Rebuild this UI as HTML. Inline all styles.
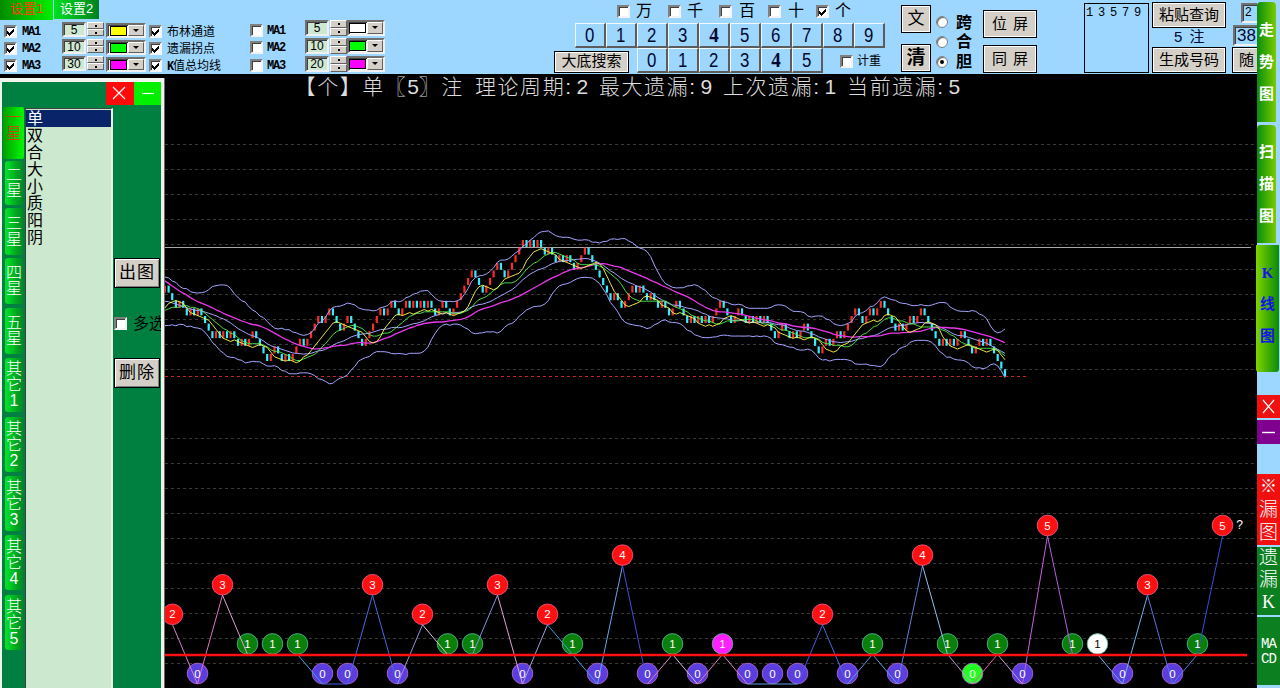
<!DOCTYPE html>
<html lang="zh-CN">
<head>
<meta charset="utf-8">
<title>K线图</title>
<style>
*{box-sizing:border-box;margin:0;padding:0}
html,body{width:1280px;height:688px;overflow:hidden;background:#000}
body{position:relative;font-family:"Liberation Sans","Noto Sans CJK SC",sans-serif;font-size:12px;color:#000}
.abs{position:absolute}
#top{position:absolute;left:0;top:0;width:1280px;height:74px;background:#9dd7ff}
#rightcol{position:absolute;left:1257px;top:0;width:23px;height:688px;background:#9dd7ff}
.tab{position:absolute;top:0;height:20px;font-size:13px;line-height:17px;text-align:center;white-space:nowrap}
.cb{position:absolute;width:13px;height:13px;background:#fff;border:2px solid;border-color:#808080 #f4f4f4 #f4f4f4 #808080;box-shadow:inset 1px 1px 0 #404040}
.cb.on:after{content:"";position:absolute;left:1px;top:4px;width:1px;height:3px;background:#000;box-shadow:1px 1px #000,2px 2px #000,3px 1px #000,4px 0 #000,5px -1px #000,6px -2px #000}
.lbl{position:absolute;font-size:12px;line-height:14px;white-space:nowrap}
.mono{font-family:"Liberation Mono","Noto Sans CJK SC",monospace;letter-spacing:-1.2px;font-weight:bold}
.tb{position:absolute;background:#cfe8d2;border:2px solid;border-color:#707070 #f0f0f0 #f0f0f0 #707070;box-shadow:inset 1px 1px 0 #404040;font-size:12px;text-align:center;line-height:12px}
.spin{position:absolute;width:17px;height:15px}
.spin i{position:absolute;left:0;width:17px;height:7px;background:#d4d0c8;border:1px solid;border-color:#fff #606060 #606060 #fff}
.spin i:after{content:"";position:absolute;left:7px;top:2px;width:2px;height:2px;background:#000}
.combo{position:absolute;width:40px;height:15px;background:#fff;border:2px solid;border-color:#707070 #f0f0f0 #f0f0f0 #707070;box-shadow:inset 1px 1px 0 #404040}
.combo b{position:absolute;left:2px;top:1px;width:17px;height:10px;border:1px solid #000}
.combo i{position:absolute;right:0;top:0;width:16px;height:11px;background:#d4d0c8;border:1px solid;border-color:#fff #606060 #606060 #fff}
.combo i:after{content:"";position:absolute;left:4px;top:3px;border:3px solid transparent;border-top:3px solid #000;border-bottom:0}
.nb{position:absolute;width:31px;height:25px;background:#9dd7ff;border:solid;border-width:1px 2px 2px 1px;border-color:#f0faff #5c5c5c #5c5c5c #f0faff;font-size:20px;line-height:22px;text-align:center;color:#000830}
.nb span{display:inline-block;transform:scaleX(.84)}
.nb .f{font-family:'Liberation Serif',serif;font-weight:bold;transform:scaleX(.95)}
.btn{position:absolute;background:#d4d0c8;border:1px solid #000;box-shadow:inset 1px 1px 0 #fff,inset -1px -1px 0 #fff;text-align:center;white-space:nowrap}
.rad{position:absolute;width:12px;height:12px;border-radius:50%;background:#fff;border:1px solid #808080;box-shadow:inset 1px 1px 1px #606060}
.rad.on:after{content:"";position:absolute;left:3px;top:3px;width:4px;height:4px;border-radius:50%;background:#000}
.vt{position:absolute;left:1257px;width:19px;border-radius:4px 4px 0 0;background:linear-gradient(90deg,#0a8c0a,#78cc00);color:#fff;font-weight:bold;font-size:15px;text-align:center}
.vt span{position:absolute;left:0;width:100%;line-height:16px}
#lp{position:absolute;left:0;top:78px;width:164px;height:610px;background:#f0f4ec}
#lp .in{position:absolute;left:2px;top:4px;width:159px;height:606px;background:#008040}
.ltab{position:absolute;left:5px;width:18px;font-weight:300;border-radius:3px;background:linear-gradient(90deg,#00e628,#00a020 70%,#008828);color:#fff;font-size:16px;line-height:16px;text-align:center;display:flex;flex-direction:column;justify-content:center}
#lb{position:absolute;left:25px;top:108px;width:88px;height:580px;padding-top:1px;background:#cce8cf;border-left:1px solid #404040;border-top:1px solid #404040;border-right:2px solid #e8f4e8;font-size:16px;line-height:17px}
#lb div{height:17px;padding-left:1px}
#title span{position:absolute;top:0;white-space:nowrap;font-size:21px;line-height:24px;letter-spacing:1.55px;color:#dcdcdc;font-weight:300}
#title i{font-style:normal;letter-spacing:5.4px}
svg text{font-family:"Liberation Sans",sans-serif}
</style>
</head>
<body>
<!-- chart -->
<svg class="abs" style="left:0;top:0" width="1280" height="688" viewBox="0 0 1280 688">
<line x1="165" y1="144.5" x2="1256" y2="144.5" stroke="#383b34" stroke-width="1" stroke-dasharray="3 3"/>
<line x1="165" y1="169.5" x2="1256" y2="169.5" stroke="#383b34" stroke-width="1" stroke-dasharray="3 3"/>
<line x1="165" y1="194.5" x2="1256" y2="194.5" stroke="#383b34" stroke-width="1" stroke-dasharray="3 3"/>
<line x1="165" y1="219.5" x2="1256" y2="219.5" stroke="#383b34" stroke-width="1" stroke-dasharray="3 3"/>
<line x1="165" y1="244.5" x2="1256" y2="244.5" stroke="#383b34" stroke-width="1" stroke-dasharray="3 3"/>
<line x1="165" y1="269.5" x2="1256" y2="269.5" stroke="#383b34" stroke-width="1" stroke-dasharray="3 3"/>
<line x1="165" y1="294.5" x2="1256" y2="294.5" stroke="#383b34" stroke-width="1" stroke-dasharray="3 3"/>
<line x1="165" y1="319.5" x2="1256" y2="319.5" stroke="#383b34" stroke-width="1" stroke-dasharray="3 3"/>
<line x1="165" y1="344.5" x2="1256" y2="344.5" stroke="#383b34" stroke-width="1" stroke-dasharray="3 3"/>
<line x1="165" y1="369.5" x2="1256" y2="369.5" stroke="#383b34" stroke-width="1" stroke-dasharray="3 3"/>
<line x1="165" y1="438.5" x2="1256" y2="438.5" stroke="#383b34" stroke-width="1" stroke-dasharray="3 3"/>
<line x1="165" y1="463.5" x2="1256" y2="463.5" stroke="#383b34" stroke-width="1" stroke-dasharray="3 3"/>
<line x1="165" y1="488.5" x2="1256" y2="488.5" stroke="#383b34" stroke-width="1" stroke-dasharray="3 3"/>
<line x1="165" y1="513.5" x2="1256" y2="513.5" stroke="#383b34" stroke-width="1" stroke-dasharray="3 3"/>
<line x1="165" y1="538.5" x2="1256" y2="538.5" stroke="#383b34" stroke-width="1" stroke-dasharray="3 3"/>
<line x1="165" y1="563.5" x2="1256" y2="563.5" stroke="#383b34" stroke-width="1" stroke-dasharray="3 3"/>
<line x1="165" y1="588.5" x2="1256" y2="588.5" stroke="#383b34" stroke-width="1" stroke-dasharray="3 3"/>
<line x1="165" y1="613.5" x2="1256" y2="613.5" stroke="#383b34" stroke-width="1" stroke-dasharray="3 3"/>
<line x1="165" y1="638.5" x2="1256" y2="638.5" stroke="#383b34" stroke-width="1" stroke-dasharray="3 3"/>
<line x1="165" y1="663.5" x2="1256" y2="663.5" stroke="#383b34" stroke-width="1" stroke-dasharray="3 3"/>
<line x1="165" y1="247.5" x2="1251" y2="247.5" stroke="#a8a8a8" stroke-width="1"/>
<line x1="165" y1="376.5" x2="1026" y2="376.5" stroke="#c02626" stroke-width="1" stroke-dasharray="3 3"/>
<rect x="163.8" y="285.6" width="2.2" height="7.0" fill="#ff2a2a"/>
<rect x="167.5" y="285.6" width="2.2" height="7.0" fill="#30f0ff"/>
<rect x="171.1" y="293.2" width="2.2" height="7.0" fill="#30f0ff"/>
<rect x="174.8" y="300.8" width="2.2" height="7.0" fill="#30f0ff"/>
<rect x="178.4" y="300.8" width="2.2" height="7.0" fill="#ff2a2a"/>
<rect x="182.1" y="300.8" width="2.2" height="7.0" fill="#30f0ff"/>
<rect x="185.7" y="308.4" width="2.2" height="7.0" fill="#30f0ff"/>
<rect x="189.4" y="308.4" width="2.2" height="7.0" fill="#ff2a2a"/>
<rect x="193.0" y="308.4" width="2.2" height="7.0" fill="#30f0ff"/>
<rect x="196.7" y="308.4" width="2.2" height="7.0" fill="#ff2a2a"/>
<rect x="200.3" y="308.4" width="2.2" height="7.0" fill="#30f0ff"/>
<rect x="204.0" y="316.0" width="2.2" height="7.0" fill="#30f0ff"/>
<rect x="207.6" y="323.6" width="2.2" height="7.0" fill="#30f0ff"/>
<rect x="211.3" y="331.2" width="2.2" height="7.0" fill="#30f0ff"/>
<rect x="214.9" y="331.2" width="2.2" height="7.0" fill="#ff2a2a"/>
<rect x="218.6" y="331.2" width="2.2" height="7.0" fill="#30f0ff"/>
<rect x="222.2" y="331.2" width="2.2" height="7.0" fill="#ff2a2a"/>
<rect x="225.9" y="331.2" width="2.2" height="7.0" fill="#30f0ff"/>
<rect x="229.5" y="331.2" width="2.2" height="7.0" fill="#ff2a2a"/>
<rect x="233.2" y="331.2" width="2.2" height="7.0" fill="#30f0ff"/>
<rect x="236.9" y="338.8" width="2.2" height="7.0" fill="#30f0ff"/>
<rect x="240.5" y="338.8" width="2.2" height="7.0" fill="#ff2a2a"/>
<rect x="244.2" y="338.8" width="2.2" height="7.0" fill="#30f0ff"/>
<rect x="247.8" y="338.8" width="2.2" height="7.0" fill="#ff2a2a"/>
<rect x="251.5" y="331.2" width="2.2" height="7.0" fill="#ff2a2a"/>
<rect x="255.1" y="331.2" width="2.2" height="7.0" fill="#30f0ff"/>
<rect x="258.8" y="338.8" width="2.2" height="7.0" fill="#30f0ff"/>
<rect x="262.4" y="346.4" width="2.2" height="7.0" fill="#30f0ff"/>
<rect x="266.1" y="354.0" width="2.2" height="7.0" fill="#30f0ff"/>
<rect x="269.7" y="354.0" width="2.2" height="7.0" fill="#ff2a2a"/>
<rect x="273.4" y="346.4" width="2.2" height="7.0" fill="#ff2a2a"/>
<rect x="277.0" y="346.4" width="2.2" height="7.0" fill="#30f0ff"/>
<rect x="280.7" y="354.0" width="2.2" height="7.0" fill="#30f0ff"/>
<rect x="284.3" y="354.0" width="2.2" height="7.0" fill="#ff2a2a"/>
<rect x="288.0" y="354.0" width="2.2" height="7.0" fill="#30f0ff"/>
<rect x="291.6" y="354.0" width="2.2" height="7.0" fill="#ff2a2a"/>
<rect x="295.3" y="346.4" width="2.2" height="7.0" fill="#ff2a2a"/>
<rect x="298.9" y="338.8" width="2.2" height="7.0" fill="#ff2a2a"/>
<rect x="302.6" y="338.8" width="2.2" height="7.0" fill="#30f0ff"/>
<rect x="306.3" y="338.8" width="2.2" height="7.0" fill="#ff2a2a"/>
<rect x="309.9" y="331.2" width="2.2" height="7.0" fill="#ff2a2a"/>
<rect x="313.6" y="323.6" width="2.2" height="7.0" fill="#ff2a2a"/>
<rect x="317.2" y="316.0" width="2.2" height="7.0" fill="#ff2a2a"/>
<rect x="320.9" y="316.0" width="2.2" height="7.0" fill="#30f0ff"/>
<rect x="324.5" y="316.0" width="2.2" height="7.0" fill="#ff2a2a"/>
<rect x="328.2" y="308.4" width="2.2" height="7.0" fill="#ff2a2a"/>
<rect x="331.8" y="308.4" width="2.2" height="7.0" fill="#30f0ff"/>
<rect x="335.5" y="316.0" width="2.2" height="7.0" fill="#30f0ff"/>
<rect x="339.1" y="323.6" width="2.2" height="7.0" fill="#30f0ff"/>
<rect x="342.8" y="323.6" width="2.2" height="7.0" fill="#ff2a2a"/>
<rect x="346.4" y="316.0" width="2.2" height="7.0" fill="#ff2a2a"/>
<rect x="350.1" y="316.0" width="2.2" height="7.0" fill="#30f0ff"/>
<rect x="353.7" y="323.6" width="2.2" height="7.0" fill="#30f0ff"/>
<rect x="357.4" y="331.2" width="2.2" height="7.0" fill="#30f0ff"/>
<rect x="361.0" y="338.8" width="2.2" height="7.0" fill="#30f0ff"/>
<rect x="364.7" y="338.8" width="2.2" height="7.0" fill="#ff2a2a"/>
<rect x="368.3" y="331.2" width="2.2" height="7.0" fill="#ff2a2a"/>
<rect x="372.0" y="323.6" width="2.2" height="7.0" fill="#ff2a2a"/>
<rect x="375.7" y="316.0" width="2.2" height="7.0" fill="#ff2a2a"/>
<rect x="379.3" y="308.4" width="2.2" height="7.0" fill="#ff2a2a"/>
<rect x="383.0" y="308.4" width="2.2" height="7.0" fill="#30f0ff"/>
<rect x="386.6" y="308.4" width="2.2" height="7.0" fill="#ff2a2a"/>
<rect x="390.3" y="300.8" width="2.2" height="7.0" fill="#ff2a2a"/>
<rect x="393.9" y="300.8" width="2.2" height="7.0" fill="#30f0ff"/>
<rect x="397.6" y="308.4" width="2.2" height="7.0" fill="#30f0ff"/>
<rect x="401.2" y="308.4" width="2.2" height="7.0" fill="#ff2a2a"/>
<rect x="404.9" y="300.8" width="2.2" height="7.0" fill="#ff2a2a"/>
<rect x="408.5" y="300.8" width="2.2" height="7.0" fill="#30f0ff"/>
<rect x="412.2" y="300.8" width="2.2" height="7.0" fill="#ff2a2a"/>
<rect x="415.8" y="300.8" width="2.2" height="7.0" fill="#30f0ff"/>
<rect x="419.5" y="300.8" width="2.2" height="7.0" fill="#ff2a2a"/>
<rect x="423.1" y="300.8" width="2.2" height="7.0" fill="#30f0ff"/>
<rect x="426.8" y="300.8" width="2.2" height="7.0" fill="#ff2a2a"/>
<rect x="430.4" y="300.8" width="2.2" height="7.0" fill="#30f0ff"/>
<rect x="434.1" y="308.4" width="2.2" height="7.0" fill="#30f0ff"/>
<rect x="437.7" y="308.4" width="2.2" height="7.0" fill="#ff2a2a"/>
<rect x="441.4" y="300.8" width="2.2" height="7.0" fill="#ff2a2a"/>
<rect x="445.1" y="300.8" width="2.2" height="7.0" fill="#30f0ff"/>
<rect x="448.7" y="308.4" width="2.2" height="7.0" fill="#30f0ff"/>
<rect x="452.4" y="308.4" width="2.2" height="7.0" fill="#ff2a2a"/>
<rect x="456.0" y="300.8" width="2.2" height="7.0" fill="#ff2a2a"/>
<rect x="459.7" y="293.2" width="2.2" height="7.0" fill="#ff2a2a"/>
<rect x="463.3" y="285.6" width="2.2" height="7.0" fill="#ff2a2a"/>
<rect x="467.0" y="278.0" width="2.2" height="7.0" fill="#ff2a2a"/>
<rect x="470.6" y="270.4" width="2.2" height="7.0" fill="#ff2a2a"/>
<rect x="474.3" y="270.4" width="2.2" height="7.0" fill="#30f0ff"/>
<rect x="477.9" y="278.0" width="2.2" height="7.0" fill="#30f0ff"/>
<rect x="481.6" y="285.6" width="2.2" height="7.0" fill="#30f0ff"/>
<rect x="485.2" y="285.6" width="2.2" height="7.0" fill="#ff2a2a"/>
<rect x="488.9" y="278.0" width="2.2" height="7.0" fill="#ff2a2a"/>
<rect x="492.5" y="270.4" width="2.2" height="7.0" fill="#ff2a2a"/>
<rect x="496.2" y="262.8" width="2.2" height="7.0" fill="#ff2a2a"/>
<rect x="499.8" y="262.8" width="2.2" height="7.0" fill="#30f0ff"/>
<rect x="503.5" y="270.4" width="2.2" height="7.0" fill="#30f0ff"/>
<rect x="507.1" y="270.4" width="2.2" height="7.0" fill="#ff2a2a"/>
<rect x="510.8" y="262.8" width="2.2" height="7.0" fill="#ff2a2a"/>
<rect x="514.4" y="255.2" width="2.2" height="7.0" fill="#ff2a2a"/>
<rect x="518.1" y="247.6" width="2.2" height="7.0" fill="#ff2a2a"/>
<rect x="521.8" y="240.0" width="2.2" height="7.0" fill="#ff2a2a"/>
<rect x="525.4" y="240.0" width="2.2" height="7.0" fill="#30f0ff"/>
<rect x="529.1" y="240.0" width="2.2" height="7.0" fill="#ff2a2a"/>
<rect x="532.7" y="240.0" width="2.2" height="7.0" fill="#30f0ff"/>
<rect x="536.4" y="240.0" width="2.2" height="7.0" fill="#ff2a2a"/>
<rect x="540.0" y="240.0" width="2.2" height="7.0" fill="#30f0ff"/>
<rect x="543.7" y="247.6" width="2.2" height="7.0" fill="#30f0ff"/>
<rect x="547.3" y="247.6" width="2.2" height="7.0" fill="#ff2a2a"/>
<rect x="551.0" y="247.6" width="2.2" height="7.0" fill="#30f0ff"/>
<rect x="554.6" y="255.2" width="2.2" height="7.0" fill="#30f0ff"/>
<rect x="558.3" y="255.2" width="2.2" height="7.0" fill="#ff2a2a"/>
<rect x="561.9" y="255.2" width="2.2" height="7.0" fill="#30f0ff"/>
<rect x="565.6" y="255.2" width="2.2" height="7.0" fill="#ff2a2a"/>
<rect x="569.2" y="255.2" width="2.2" height="7.0" fill="#30f0ff"/>
<rect x="572.9" y="262.8" width="2.2" height="7.0" fill="#30f0ff"/>
<rect x="576.5" y="262.8" width="2.2" height="7.0" fill="#ff2a2a"/>
<rect x="580.2" y="255.2" width="2.2" height="7.0" fill="#ff2a2a"/>
<rect x="583.8" y="247.6" width="2.2" height="7.0" fill="#ff2a2a"/>
<rect x="587.5" y="247.6" width="2.2" height="7.0" fill="#30f0ff"/>
<rect x="591.2" y="255.2" width="2.2" height="7.0" fill="#30f0ff"/>
<rect x="594.8" y="262.8" width="2.2" height="7.0" fill="#30f0ff"/>
<rect x="598.5" y="270.4" width="2.2" height="7.0" fill="#30f0ff"/>
<rect x="602.1" y="278.0" width="2.2" height="7.0" fill="#30f0ff"/>
<rect x="605.8" y="285.6" width="2.2" height="7.0" fill="#30f0ff"/>
<rect x="609.4" y="293.2" width="2.2" height="7.0" fill="#30f0ff"/>
<rect x="613.1" y="293.2" width="2.2" height="7.0" fill="#ff2a2a"/>
<rect x="616.7" y="293.2" width="2.2" height="7.0" fill="#30f0ff"/>
<rect x="620.4" y="300.8" width="2.2" height="7.0" fill="#30f0ff"/>
<rect x="624.0" y="300.8" width="2.2" height="7.0" fill="#ff2a2a"/>
<rect x="627.7" y="293.2" width="2.2" height="7.0" fill="#ff2a2a"/>
<rect x="631.3" y="285.6" width="2.2" height="7.0" fill="#ff2a2a"/>
<rect x="635.0" y="285.6" width="2.2" height="7.0" fill="#30f0ff"/>
<rect x="638.6" y="285.6" width="2.2" height="7.0" fill="#ff2a2a"/>
<rect x="642.3" y="285.6" width="2.2" height="7.0" fill="#30f0ff"/>
<rect x="645.9" y="293.2" width="2.2" height="7.0" fill="#30f0ff"/>
<rect x="649.6" y="293.2" width="2.2" height="7.0" fill="#ff2a2a"/>
<rect x="653.2" y="293.2" width="2.2" height="7.0" fill="#30f0ff"/>
<rect x="656.9" y="300.8" width="2.2" height="7.0" fill="#30f0ff"/>
<rect x="660.6" y="300.8" width="2.2" height="7.0" fill="#ff2a2a"/>
<rect x="664.2" y="300.8" width="2.2" height="7.0" fill="#30f0ff"/>
<rect x="667.9" y="308.4" width="2.2" height="7.0" fill="#30f0ff"/>
<rect x="671.5" y="308.4" width="2.2" height="7.0" fill="#ff2a2a"/>
<rect x="675.2" y="300.8" width="2.2" height="7.0" fill="#ff2a2a"/>
<rect x="678.8" y="300.8" width="2.2" height="7.0" fill="#30f0ff"/>
<rect x="682.5" y="308.4" width="2.2" height="7.0" fill="#30f0ff"/>
<rect x="686.1" y="316.0" width="2.2" height="7.0" fill="#30f0ff"/>
<rect x="689.8" y="316.0" width="2.2" height="7.0" fill="#ff2a2a"/>
<rect x="693.4" y="316.0" width="2.2" height="7.0" fill="#30f0ff"/>
<rect x="697.1" y="316.0" width="2.2" height="7.0" fill="#ff2a2a"/>
<rect x="700.7" y="316.0" width="2.2" height="7.0" fill="#30f0ff"/>
<rect x="704.4" y="316.0" width="2.2" height="7.0" fill="#ff2a2a"/>
<rect x="708.0" y="316.0" width="2.2" height="7.0" fill="#30f0ff"/>
<rect x="711.7" y="316.0" width="2.2" height="7.0" fill="#ff2a2a"/>
<rect x="715.3" y="308.4" width="2.2" height="7.0" fill="#ff2a2a"/>
<rect x="719.0" y="300.8" width="2.2" height="7.0" fill="#ff2a2a"/>
<rect x="722.6" y="300.8" width="2.2" height="7.0" fill="#30f0ff"/>
<rect x="726.3" y="308.4" width="2.2" height="7.0" fill="#30f0ff"/>
<rect x="730.0" y="316.0" width="2.2" height="7.0" fill="#30f0ff"/>
<rect x="733.6" y="316.0" width="2.2" height="7.0" fill="#ff2a2a"/>
<rect x="737.3" y="308.4" width="2.2" height="7.0" fill="#ff2a2a"/>
<rect x="740.9" y="308.4" width="2.2" height="7.0" fill="#30f0ff"/>
<rect x="744.6" y="316.0" width="2.2" height="7.0" fill="#30f0ff"/>
<rect x="748.2" y="316.0" width="2.2" height="7.0" fill="#ff2a2a"/>
<rect x="751.9" y="316.0" width="2.2" height="7.0" fill="#30f0ff"/>
<rect x="755.5" y="316.0" width="2.2" height="7.0" fill="#ff2a2a"/>
<rect x="759.2" y="316.0" width="2.2" height="7.0" fill="#30f0ff"/>
<rect x="762.8" y="316.0" width="2.2" height="7.0" fill="#ff2a2a"/>
<rect x="766.5" y="316.0" width="2.2" height="7.0" fill="#30f0ff"/>
<rect x="770.1" y="323.6" width="2.2" height="7.0" fill="#30f0ff"/>
<rect x="773.8" y="331.2" width="2.2" height="7.0" fill="#30f0ff"/>
<rect x="777.4" y="331.2" width="2.2" height="7.0" fill="#ff2a2a"/>
<rect x="781.1" y="323.6" width="2.2" height="7.0" fill="#ff2a2a"/>
<rect x="784.7" y="323.6" width="2.2" height="7.0" fill="#30f0ff"/>
<rect x="788.4" y="331.2" width="2.2" height="7.0" fill="#30f0ff"/>
<rect x="792.0" y="331.2" width="2.2" height="7.0" fill="#ff2a2a"/>
<rect x="795.7" y="331.2" width="2.2" height="7.0" fill="#30f0ff"/>
<rect x="799.4" y="331.2" width="2.2" height="7.0" fill="#ff2a2a"/>
<rect x="803.0" y="323.6" width="2.2" height="7.0" fill="#ff2a2a"/>
<rect x="806.7" y="323.6" width="2.2" height="7.0" fill="#30f0ff"/>
<rect x="810.3" y="331.2" width="2.2" height="7.0" fill="#30f0ff"/>
<rect x="814.0" y="338.8" width="2.2" height="7.0" fill="#30f0ff"/>
<rect x="817.6" y="346.4" width="2.2" height="7.0" fill="#30f0ff"/>
<rect x="821.3" y="346.4" width="2.2" height="7.0" fill="#ff2a2a"/>
<rect x="824.9" y="338.8" width="2.2" height="7.0" fill="#ff2a2a"/>
<rect x="828.6" y="338.8" width="2.2" height="7.0" fill="#30f0ff"/>
<rect x="832.2" y="338.8" width="2.2" height="7.0" fill="#ff2a2a"/>
<rect x="835.9" y="331.2" width="2.2" height="7.0" fill="#ff2a2a"/>
<rect x="839.5" y="331.2" width="2.2" height="7.0" fill="#30f0ff"/>
<rect x="843.2" y="331.2" width="2.2" height="7.0" fill="#ff2a2a"/>
<rect x="846.8" y="323.6" width="2.2" height="7.0" fill="#ff2a2a"/>
<rect x="850.5" y="316.0" width="2.2" height="7.0" fill="#ff2a2a"/>
<rect x="854.1" y="308.4" width="2.2" height="7.0" fill="#ff2a2a"/>
<rect x="857.8" y="308.4" width="2.2" height="7.0" fill="#30f0ff"/>
<rect x="861.4" y="316.0" width="2.2" height="7.0" fill="#30f0ff"/>
<rect x="865.1" y="316.0" width="2.2" height="7.0" fill="#ff2a2a"/>
<rect x="868.8" y="308.4" width="2.2" height="7.0" fill="#ff2a2a"/>
<rect x="872.4" y="308.4" width="2.2" height="7.0" fill="#30f0ff"/>
<rect x="876.1" y="308.4" width="2.2" height="7.0" fill="#ff2a2a"/>
<rect x="879.7" y="300.8" width="2.2" height="7.0" fill="#ff2a2a"/>
<rect x="883.4" y="300.8" width="2.2" height="7.0" fill="#30f0ff"/>
<rect x="887.0" y="308.4" width="2.2" height="7.0" fill="#30f0ff"/>
<rect x="890.7" y="316.0" width="2.2" height="7.0" fill="#30f0ff"/>
<rect x="894.3" y="323.6" width="2.2" height="7.0" fill="#30f0ff"/>
<rect x="898.0" y="323.6" width="2.2" height="7.0" fill="#ff2a2a"/>
<rect x="901.6" y="323.6" width="2.2" height="7.0" fill="#30f0ff"/>
<rect x="905.3" y="323.6" width="2.2" height="7.0" fill="#ff2a2a"/>
<rect x="908.9" y="316.0" width="2.2" height="7.0" fill="#ff2a2a"/>
<rect x="912.6" y="316.0" width="2.2" height="7.0" fill="#30f0ff"/>
<rect x="916.2" y="316.0" width="2.2" height="7.0" fill="#ff2a2a"/>
<rect x="919.9" y="308.4" width="2.2" height="7.0" fill="#ff2a2a"/>
<rect x="923.5" y="308.4" width="2.2" height="7.0" fill="#30f0ff"/>
<rect x="927.2" y="316.0" width="2.2" height="7.0" fill="#30f0ff"/>
<rect x="930.8" y="323.6" width="2.2" height="7.0" fill="#30f0ff"/>
<rect x="934.5" y="331.2" width="2.2" height="7.0" fill="#30f0ff"/>
<rect x="938.2" y="338.8" width="2.2" height="7.0" fill="#30f0ff"/>
<rect x="941.8" y="338.8" width="2.2" height="7.0" fill="#ff2a2a"/>
<rect x="945.5" y="338.8" width="2.2" height="7.0" fill="#30f0ff"/>
<rect x="949.1" y="338.8" width="2.2" height="7.0" fill="#ff2a2a"/>
<rect x="952.8" y="338.8" width="2.2" height="7.0" fill="#30f0ff"/>
<rect x="956.4" y="338.8" width="2.2" height="7.0" fill="#ff2a2a"/>
<rect x="960.1" y="331.2" width="2.2" height="7.0" fill="#ff2a2a"/>
<rect x="963.7" y="331.2" width="2.2" height="7.0" fill="#30f0ff"/>
<rect x="967.4" y="338.8" width="2.2" height="7.0" fill="#30f0ff"/>
<rect x="971.0" y="346.4" width="2.2" height="7.0" fill="#30f0ff"/>
<rect x="974.7" y="346.4" width="2.2" height="7.0" fill="#ff2a2a"/>
<rect x="978.3" y="338.8" width="2.2" height="7.0" fill="#ff2a2a"/>
<rect x="982.0" y="338.8" width="2.2" height="7.0" fill="#30f0ff"/>
<rect x="985.6" y="338.8" width="2.2" height="7.0" fill="#ff2a2a"/>
<rect x="989.3" y="338.8" width="2.2" height="7.0" fill="#30f0ff"/>
<rect x="992.9" y="346.4" width="2.2" height="7.0" fill="#30f0ff"/>
<rect x="996.6" y="354.0" width="2.2" height="7.0" fill="#30f0ff"/>
<rect x="1000.2" y="361.6" width="2.2" height="7.0" fill="#30f0ff"/>
<rect x="1003.9" y="369.2" width="2.2" height="7.0" fill="#30f0ff"/>
<polyline points="164.9,277.0 168.6,277.9 172.2,281.0 175.9,282.4 179.5,286.3 183.2,288.5 186.8,288.7 190.5,291.7 194.1,292.6 197.8,293.0 201.4,292.7 205.1,291.9 208.7,289.7 212.4,286.6 216.0,285.7 219.7,285.0 223.3,284.9 227.0,285.4 230.6,288.5 234.3,293.9 238.0,297.4 241.6,300.7 245.3,302.1 248.9,306.8 252.6,310.1 256.2,312.0 259.9,316.0 263.5,317.7 267.2,321.4 270.8,325.2 274.5,328.1 278.1,329.0 281.8,328.1 285.4,329.8 289.1,329.7 292.7,332.0 296.4,332.8 300.0,334.5 303.7,335.4 307.4,334.5 311.0,332.8 314.7,328.5 318.3,323.1 322.0,321.5 325.6,317.1 329.3,310.8 332.9,307.4 336.6,306.4 340.2,306.1 343.9,304.8 347.5,303.0 351.2,303.9 354.8,304.9 358.5,307.9 362.1,309.1 365.8,309.9 369.4,310.1 373.1,310.9 376.8,310.2 380.4,307.7 384.1,306.9 387.7,305.6 391.4,301.9 395.0,300.8 398.7,301.9 402.3,300.8 406.0,297.7 409.6,296.5 413.3,294.1 416.9,293.3 420.6,291.2 424.2,290.7 427.9,290.6 431.5,294.4 435.2,298.1 438.8,300.7 442.5,301.3 446.2,301.7 449.8,301.3 453.5,301.7 457.1,300.9 460.8,299.0 464.4,294.3 468.1,288.6 471.7,281.2 475.4,277.6 479.0,275.9 482.7,275.4 486.3,274.0 490.0,271.4 493.6,267.7 497.3,262.4 500.9,260.0 504.6,260.2 508.2,258.9 511.9,256.0 515.5,252.9 519.2,250.5 522.9,246.1 526.5,243.9 530.2,239.9 533.8,237.6 537.5,233.9 541.1,231.9 544.8,231.4 548.4,230.9 552.1,233.4 555.7,235.6 559.4,236.8 563.0,237.3 566.7,237.2 570.3,237.8 574.0,239.2 577.6,240.1 581.3,240.2 584.9,239.7 588.6,240.2 592.3,242.2 595.9,242.1 599.6,243.0 603.2,241.5 606.9,241.3 610.5,239.2 614.2,238.9 617.8,239.5 621.5,238.6 625.1,238.7 628.8,241.1 632.4,242.7 636.1,245.9 639.7,248.0 643.4,249.2 647.0,251.6 650.7,256.6 654.3,265.0 658.0,272.1 661.7,278.8 665.3,283.5 669.0,285.5 672.6,287.3 676.3,287.9 679.9,287.8 683.6,287.7 687.2,286.0 690.9,285.6 694.5,284.7 698.2,285.9 701.8,288.5 705.5,290.5 709.1,294.5 712.8,297.5 716.4,298.6 720.1,300.6 723.7,301.9 727.4,302.4 731.1,304.2 734.7,304.9 738.4,304.2 742.0,304.9 745.7,307.3 749.3,308.3 753.0,308.3 756.6,308.3 760.3,308.3 763.9,308.3 767.6,308.3 771.2,307.3 774.9,305.3 778.5,304.8 782.2,305.1 785.8,306.3 789.5,309.1 793.1,311.3 796.8,311.5 800.5,311.7 804.1,312.6 807.8,315.9 811.4,317.1 815.1,316.2 818.7,315.9 822.4,316.2 826.0,319.0 829.7,319.9 833.3,323.5 837.0,324.9 840.6,325.5 844.3,324.9 847.9,323.5 851.6,321.5 855.2,316.3 858.9,313.5 862.5,312.7 866.2,310.5 869.9,306.9 873.5,305.9 877.2,302.8 880.8,298.5 884.5,296.9 888.1,298.3 891.8,299.7 895.4,300.3 899.1,302.5 902.7,303.4 906.4,303.7 910.0,305.0 913.7,305.7 917.3,305.5 921.0,304.6 924.6,305.5 928.3,305.7 931.9,305.0 935.6,303.7 939.3,302.6 942.9,302.5 946.6,303.0 950.2,307.1 953.9,309.1 957.5,310.7 961.2,311.3 964.8,311.3 968.5,311.6 972.1,310.5 975.8,311.4 979.4,314.1 983.1,315.5 986.7,318.9 990.4,325.8 994.0,330.8 997.7,332.8 1001.3,331.8 1005.0,328.9" fill="none" stroke="#a4a4ff" stroke-width="1" stroke-linejoin="round"/>
<polyline points="164.9,301.3 168.6,301.7 172.2,302.9 175.9,304.1 179.5,305.3 183.2,306.5 186.8,307.7 190.5,308.9 194.1,310.1 197.8,310.5 201.4,310.9 205.1,312.1 208.7,313.3 212.4,314.5 216.0,315.7 219.7,317.7 223.3,318.9 227.0,320.9 230.6,322.9 234.3,325.7 238.0,328.5 241.6,330.5 245.3,332.5 248.9,334.5 252.6,335.7 256.2,336.9 259.9,338.9 263.5,340.9 267.2,343.7 270.8,345.7 274.5,346.9 278.1,348.1 281.8,349.3 285.4,350.5 289.1,351.7 292.7,352.9 296.4,353.3 300.0,353.7 303.7,354.1 307.4,353.7 311.0,353.3 314.7,352.1 318.3,350.9 322.0,350.5 325.6,349.3 329.3,347.3 332.9,345.3 336.6,343.3 340.2,342.1 343.9,340.9 347.5,338.9 351.2,336.9 354.8,335.7 358.5,334.5 362.1,334.1 365.8,333.7 369.4,333.3 373.1,332.1 376.8,330.9 380.4,329.7 384.1,329.3 387.7,328.9 391.4,327.7 395.0,327.3 398.7,327.7 402.3,327.3 406.0,326.1 409.6,324.9 413.3,323.7 416.9,323.3 420.6,322.1 424.2,320.9 427.9,318.9 431.5,316.9 435.2,315.7 438.8,314.5 442.5,313.3 446.2,312.9 449.8,313.3 453.5,312.9 457.1,312.5 460.8,312.1 464.4,310.9 468.1,308.9 471.7,306.9 475.4,305.7 479.0,304.5 482.7,304.1 486.3,302.9 490.0,301.7 493.6,299.7 497.3,297.7 500.9,295.7 504.6,293.7 508.2,291.7 511.9,289.7 515.5,286.9 519.2,283.3 522.9,279.7 526.5,276.9 530.2,274.1 533.8,272.1 537.5,270.1 541.1,268.9 544.8,267.7 548.4,265.7 552.1,263.7 555.7,262.5 559.4,261.3 563.0,260.9 566.7,260.5 570.3,260.1 574.0,259.7 577.6,259.3 581.3,258.9 584.9,258.5 588.6,258.9 592.3,260.1 595.9,261.3 599.6,263.3 603.2,265.3 606.9,268.1 610.5,270.9 614.2,272.9 617.8,275.7 621.5,278.5 625.1,280.5 628.8,282.5 632.4,283.7 636.1,285.7 639.7,286.9 643.4,288.1 647.0,290.1 650.7,292.1 654.3,294.9 658.0,297.7 661.7,299.7 665.3,301.7 669.0,303.7 672.6,304.9 676.3,305.3 679.9,305.7 683.6,306.9 687.2,308.1 690.9,308.5 694.5,309.7 698.2,310.9 701.8,312.9 705.5,314.1 709.1,316.1 712.8,317.3 716.4,317.7 720.1,318.1 723.7,318.5 727.4,318.9 731.1,320.1 734.7,320.5 738.4,320.1 742.0,320.5 745.7,321.7 749.3,322.1 753.0,322.5 756.6,322.1 760.3,322.5 763.9,322.1 767.6,322.5 771.2,322.9 774.9,324.1 778.5,324.5 782.2,324.9 785.8,326.1 789.5,328.1 793.1,329.3 796.8,330.5 800.5,330.9 804.1,331.3 807.8,332.5 811.4,333.7 815.1,334.9 818.7,336.9 822.4,338.1 826.0,339.3 829.7,340.5 833.3,341.7 837.0,342.1 840.6,342.5 844.3,342.1 847.9,341.7 851.6,341.3 855.2,340.1 858.9,338.9 862.5,338.5 866.2,337.3 869.9,336.1 873.5,335.7 877.2,334.5 880.8,332.5 884.5,330.5 888.1,328.5 891.8,327.3 895.4,326.9 899.1,325.7 902.7,325.3 906.4,324.9 910.0,323.7 913.7,323.3 917.3,322.9 921.0,322.5 924.6,322.9 928.3,323.3 931.9,323.7 935.6,324.9 939.3,326.9 942.9,328.1 946.6,330.1 950.2,332.1 953.9,334.1 957.5,335.3 961.2,335.7 964.8,336.1 968.5,337.3 972.1,338.5 975.8,339.7 979.4,340.9 983.1,342.1 986.7,343.3 990.4,345.3 994.0,347.3 997.7,349.3 1001.3,351.3 1005.0,353.3" fill="none" stroke="#a4a4ff" stroke-width="1" stroke-linejoin="round"/>
<polyline points="164.9,325.6 168.6,325.5 172.2,324.8 175.9,325.8 179.5,324.3 183.2,324.5 186.8,326.7 190.5,326.1 194.1,327.6 197.8,328.0 201.4,329.1 205.1,332.3 208.7,336.9 212.4,342.4 216.0,345.7 219.7,350.4 223.3,352.9 227.0,356.4 230.6,357.3 234.3,357.5 238.0,359.6 241.6,360.3 245.3,362.9 248.9,362.2 252.6,361.3 256.2,361.8 259.9,361.8 263.5,364.1 267.2,366.0 270.8,366.2 274.5,365.7 278.1,367.2 281.8,370.5 285.4,371.2 289.1,373.7 292.7,373.8 296.4,373.8 300.0,372.9 303.7,372.8 307.4,372.9 311.0,373.8 314.7,375.7 318.3,378.7 322.0,379.5 325.6,381.5 329.3,383.8 332.9,383.2 336.6,380.2 340.2,378.1 343.9,377.0 347.5,374.8 351.2,369.9 354.8,366.5 358.5,361.1 362.1,359.1 365.8,357.5 369.4,356.5 373.1,353.3 376.8,351.6 380.4,351.7 384.1,351.7 387.7,352.2 391.4,353.5 395.0,353.8 398.7,353.5 402.3,353.8 406.0,354.5 409.6,353.3 413.3,353.3 416.9,353.3 420.6,353.0 424.2,351.1 427.9,347.2 431.5,339.4 435.2,333.3 438.8,328.3 442.5,325.3 446.2,324.1 449.8,325.3 453.5,324.1 457.1,324.1 460.8,325.2 464.4,327.5 468.1,329.2 471.7,332.6 475.4,333.8 479.0,333.1 482.7,332.8 486.3,331.8 490.0,332.0 493.6,331.7 497.3,333.0 500.9,331.4 504.6,327.2 508.2,324.5 511.9,323.4 515.5,320.9 519.2,316.1 522.9,313.3 526.5,309.9 530.2,308.3 533.8,306.6 537.5,306.3 541.1,305.9 544.8,304.0 548.4,300.5 552.1,294.0 555.7,289.4 559.4,285.8 563.0,284.5 566.7,283.8 570.3,282.4 574.0,280.2 577.6,278.5 581.3,277.6 584.9,277.3 588.6,277.6 592.3,278.0 595.9,280.5 599.6,283.6 603.2,289.1 606.9,294.9 610.5,302.6 614.2,306.9 617.8,311.9 621.5,318.4 625.1,322.3 628.8,323.9 632.4,324.7 636.1,325.5 639.7,325.8 643.4,327.0 647.0,328.6 650.7,327.6 654.3,324.8 658.0,323.3 661.7,320.6 665.3,319.9 669.0,321.9 672.6,322.5 676.3,322.7 679.9,323.6 683.6,326.1 687.2,330.2 690.9,331.4 694.5,334.7 698.2,335.9 701.8,337.3 705.5,337.7 709.1,337.7 712.8,337.1 716.4,336.8 720.1,335.6 723.7,335.1 727.4,335.4 731.1,336.0 734.7,336.1 738.4,336.0 742.0,336.1 745.7,336.1 749.3,335.9 753.0,336.7 756.6,335.9 760.3,336.7 763.9,335.9 767.6,336.7 771.2,338.5 774.9,342.9 778.5,344.2 782.2,344.7 785.8,345.9 789.5,347.1 793.1,347.3 796.8,349.5 800.5,350.1 804.1,350.0 807.8,349.1 811.4,350.3 815.1,353.6 818.7,357.9 822.4,360.0 826.0,359.6 829.7,361.1 833.3,359.9 837.0,359.3 840.6,359.5 844.3,359.3 847.9,359.9 851.6,361.1 855.2,363.9 858.9,364.3 862.5,364.3 866.2,364.1 869.9,365.3 873.5,365.5 877.2,366.2 880.8,366.5 884.5,364.1 888.1,358.7 891.8,354.9 895.4,353.5 899.1,348.9 902.7,347.2 906.4,346.1 910.0,342.4 913.7,340.9 917.3,340.3 921.0,340.4 924.6,340.3 928.3,340.9 931.9,342.4 935.6,346.1 939.3,351.2 942.9,353.7 946.6,357.2 950.2,357.1 953.9,359.1 957.5,359.9 961.2,360.1 964.8,360.9 968.5,363.0 972.1,366.5 975.8,368.0 979.4,367.7 983.1,368.7 986.7,367.7 990.4,364.8 994.0,363.8 997.7,365.8 1001.3,370.8 1005.0,377.7" fill="none" stroke="#a4a4ff" stroke-width="1" stroke-linejoin="round"/>
<polyline points="164.9,280.9 168.6,283.4 172.2,286.0 175.9,288.5 179.5,291.0 183.2,293.1 186.8,295.1 190.5,297.6 194.1,299.7 197.8,301.7 201.4,303.2 205.1,304.7 208.7,306.2 212.4,307.8 216.0,309.8 219.7,311.3 223.3,313.3 227.0,314.9 230.6,316.4 234.3,317.9 238.0,319.4 241.6,320.9 245.3,322.0 248.9,323.5 252.6,324.5 256.2,325.0 259.9,326.0 263.5,327.5 267.2,329.0 270.8,331.1 274.5,333.1 278.1,335.1 281.8,337.2 285.4,339.2 289.1,340.7 292.7,342.7 296.4,344.2 300.0,345.3 303.7,346.3 307.4,347.3 311.0,348.3 314.7,348.8 318.3,348.8 322.0,348.3 325.6,347.8 329.3,347.3 332.9,346.3 336.6,345.8 340.2,345.3 343.9,345.3 347.5,344.8 351.2,343.7 354.8,343.2 358.5,342.7 362.1,342.7 365.8,343.2 369.4,343.2 373.1,342.7 376.8,341.7 380.4,340.2 384.1,338.7 387.7,337.7 391.4,336.1 395.0,334.1 398.7,332.6 402.3,331.1 406.0,329.6 409.6,328.0 413.3,327.0 416.9,325.5 420.6,324.5 424.2,323.5 427.9,323.0 431.5,322.5 435.2,322.0 438.8,322.0 442.5,322.0 446.2,321.4 449.8,320.9 453.5,320.4 457.1,319.9 460.8,319.4 464.4,318.4 468.1,316.9 471.7,314.9 475.4,312.3 479.0,310.3 482.7,308.8 486.3,307.8 490.0,306.8 493.6,305.7 497.3,304.2 500.9,302.7 504.6,301.7 508.2,300.7 511.9,299.2 515.5,297.6 519.2,296.1 522.9,294.1 526.5,292.1 530.2,290.0 533.8,288.0 537.5,286.0 541.1,284.0 544.8,281.9 548.4,279.9 552.1,277.9 555.7,276.4 559.4,274.8 563.0,272.8 566.7,271.3 570.3,269.8 574.0,268.8 577.6,268.2 581.3,267.7 584.9,267.2 588.6,266.2 592.3,265.2 595.9,264.2 599.6,263.7 603.2,263.7 606.9,264.2 610.5,265.2 614.2,266.2 617.8,266.7 621.5,267.7 625.1,269.3 628.8,270.8 632.4,272.3 636.1,273.8 639.7,275.3 643.4,276.9 647.0,278.4 650.7,280.4 654.3,281.9 658.0,283.4 661.7,285.5 665.3,287.0 669.0,288.5 672.6,290.5 676.3,292.1 679.9,293.6 683.6,295.1 687.2,296.6 690.9,298.6 694.5,300.7 698.2,303.2 701.8,305.2 705.5,307.3 709.1,308.8 712.8,310.3 716.4,311.3 720.1,311.8 723.7,311.8 727.4,312.3 731.1,312.8 734.7,313.3 738.4,313.8 742.0,314.4 745.7,315.4 749.3,316.4 753.0,317.4 756.6,318.4 760.3,318.9 763.9,319.9 767.6,320.4 771.2,320.9 774.9,322.0 778.5,323.0 782.2,323.5 785.8,324.0 789.5,325.0 793.1,326.0 796.8,326.5 800.5,327.0 804.1,327.5 807.8,327.5 811.4,328.0 815.1,328.5 818.7,329.6 822.4,330.6 826.0,331.6 829.7,332.6 833.3,334.1 837.0,335.1 840.6,335.6 844.3,336.1 847.9,336.6 851.6,337.2 855.2,337.2 858.9,336.6 862.5,336.6 866.2,336.6 869.9,336.6 873.5,336.1 877.2,336.1 880.8,335.6 884.5,334.6 888.1,333.6 891.8,333.1 895.4,333.1 899.1,333.1 902.7,332.6 906.4,332.6 910.0,332.1 913.7,331.6 917.3,331.6 921.0,331.1 924.6,330.1 928.3,329.0 931.9,328.0 935.6,327.5 939.3,327.5 942.9,327.5 946.6,327.5 950.2,328.0 953.9,328.0 957.5,328.5 961.2,329.0 964.8,329.6 968.5,330.6 972.1,331.6 975.8,332.6 979.4,333.6 983.1,334.6 986.7,335.6 990.4,336.6 994.0,338.2 997.7,339.7 1001.3,341.2 1005.0,342.7" fill="none" stroke="#e838e8" stroke-width="1.3" stroke-linejoin="round"/>
<polyline points="164.9,310.3 168.6,308.8 172.2,307.3 175.9,307.3 179.5,307.3 183.2,305.7 186.8,305.7 190.5,307.3 194.1,307.3 197.8,308.8 201.4,310.3 205.1,313.3 208.7,316.4 212.4,319.4 216.0,322.5 219.7,325.5 223.3,328.5 227.0,330.1 230.6,333.1 234.3,334.6 238.0,337.7 241.6,340.7 245.3,342.2 248.9,343.7 252.6,343.7 256.2,343.7 259.9,343.7 263.5,345.3 267.2,346.8 270.8,349.8 274.5,351.3 278.1,351.3 281.8,352.9 285.4,354.4 289.1,355.9 292.7,358.9 296.4,360.5 300.0,360.5 303.7,358.9 307.4,357.4 311.0,355.9 314.7,354.4 318.3,351.3 322.0,346.8 325.6,343.7 329.3,339.2 332.9,334.6 336.6,331.6 340.2,330.1 343.9,328.5 347.5,327.0 351.2,325.5 354.8,325.5 358.5,327.0 362.1,328.5 365.8,331.6 369.4,334.6 373.1,336.1 376.8,336.1 380.4,334.6 384.1,333.1 387.7,333.1 391.4,331.6 395.0,328.5 398.7,325.5 402.3,322.5 406.0,319.4 409.6,316.4 413.3,314.9 416.9,313.3 420.6,313.3 424.2,311.8 427.9,311.8 431.5,311.8 435.2,311.8 438.8,311.8 442.5,311.8 446.2,311.8 449.8,311.8 453.5,313.3 457.1,313.3 460.8,313.3 464.4,311.8 468.1,310.3 471.7,307.3 475.4,302.7 479.0,299.7 482.7,298.1 486.3,296.6 490.0,293.6 493.6,290.5 497.3,287.5 500.9,284.5 504.6,282.9 508.2,282.9 511.9,282.9 515.5,281.4 519.2,278.4 522.9,273.8 526.5,269.3 530.2,266.2 533.8,263.2 537.5,261.7 541.1,258.6 544.8,255.6 548.4,254.1 552.1,252.5 555.7,252.5 559.4,254.1 563.0,255.6 566.7,257.1 570.3,258.6 574.0,260.1 577.6,263.2 581.3,264.7 584.9,264.7 588.6,264.7 592.3,264.7 595.9,264.7 599.6,266.2 603.2,267.7 606.9,270.8 610.5,273.8 614.2,276.9 617.8,279.9 621.5,284.5 625.1,290.5 628.8,295.1 632.4,298.1 636.1,299.7 639.7,301.2 643.4,301.2 647.0,301.2 650.7,301.2 654.3,301.2 658.0,301.2 661.7,301.2 665.3,301.2 669.0,302.7 672.6,305.7 676.3,307.3 679.9,308.8 683.6,310.3 687.2,311.8 690.9,314.9 694.5,316.4 698.2,317.9 701.8,319.4 705.5,320.9 709.1,320.9 712.8,322.5 716.4,324.0 720.1,324.0 723.7,322.5 727.4,320.9 731.1,320.9 734.7,320.9 738.4,320.9 742.0,319.4 745.7,319.4 749.3,319.4 753.0,319.4 756.6,320.9 760.3,322.5 763.9,324.0 767.6,324.0 771.2,324.0 774.9,325.5 778.5,328.5 782.2,330.1 785.8,330.1 789.5,331.6 793.1,333.1 796.8,334.6 800.5,336.1 804.1,337.7 807.8,337.7 811.4,337.7 815.1,337.7 818.7,339.2 822.4,342.2 826.0,343.7 829.7,343.7 833.3,345.3 837.0,345.3 840.6,345.3 844.3,346.8 847.9,346.8 851.6,345.3 855.2,342.2 858.9,337.7 862.5,334.6 866.2,333.1 869.9,330.1 873.5,327.0 877.2,325.5 880.8,322.5 884.5,319.4 888.1,317.9 891.8,317.9 895.4,319.4 899.1,320.9 902.7,320.9 906.4,322.5 910.0,324.0 913.7,324.0 917.3,325.5 921.0,327.0 924.6,327.0 928.3,327.0 931.9,327.0 935.6,327.0 939.3,328.5 942.9,330.1 946.6,331.6 950.2,334.6 953.9,336.1 957.5,339.2 961.2,342.2 964.8,343.7 968.5,345.3 972.1,346.8 975.8,348.3 979.4,348.3 983.1,348.3 986.7,348.3 990.4,348.3 994.0,348.3 997.7,349.8 1001.3,352.9 1005.0,355.9" fill="none" stroke="#50f050" stroke-width="0.9" stroke-linejoin="round"/>
<polyline points="164.9,308.0 168.6,303.5 172.2,301.9 175.9,300.4 179.5,301.9 183.2,303.5 186.8,308.0 190.5,312.6 194.1,314.1 197.8,315.6 201.4,317.1 205.1,318.7 208.7,320.2 212.4,324.7 216.0,329.3 219.7,333.9 223.3,338.4 227.0,339.9 230.6,341.5 234.3,339.9 238.0,341.5 241.6,343.0 245.3,344.5 248.9,346.0 252.6,347.5 256.2,346.0 259.9,344.5 263.5,346.0 267.2,347.5 270.8,352.1 274.5,356.7 278.1,358.2 281.8,359.7 285.4,361.2 289.1,359.7 292.7,361.2 296.4,362.7 300.0,361.2 303.7,356.7 307.4,355.1 311.0,350.6 314.7,346.0 318.3,341.5 322.0,336.9 325.6,332.3 329.3,327.8 332.9,323.2 336.6,321.7 340.2,323.2 343.9,324.7 347.5,326.3 351.2,327.8 354.8,329.3 358.5,330.8 362.1,332.3 365.8,336.9 369.4,341.5 373.1,343.0 376.8,341.5 380.4,336.9 384.1,329.3 387.7,324.7 391.4,320.2 395.0,315.6 398.7,314.1 402.3,315.6 406.0,314.1 409.6,312.6 413.3,314.1 416.9,312.6 420.6,311.1 424.2,309.5 427.9,311.1 431.5,309.5 435.2,311.1 438.8,312.6 442.5,314.1 446.2,312.6 449.8,314.1 453.5,315.6 457.1,314.1 460.8,312.6 464.4,311.1 468.1,306.5 471.7,298.9 475.4,291.3 479.0,286.7 482.7,285.2 486.3,286.7 490.0,288.3 493.6,289.8 497.3,288.3 500.9,283.7 504.6,279.1 508.2,277.6 511.9,276.1 515.5,274.6 519.2,273.1 522.9,268.5 526.5,260.9 530.2,256.3 533.8,251.8 537.5,250.3 541.1,248.7 544.8,250.3 548.4,251.8 552.1,253.3 555.7,254.8 559.4,259.4 563.0,260.9 566.7,262.4 570.3,263.9 574.0,265.5 577.6,267.0 581.3,268.5 584.9,267.0 588.6,265.5 592.3,263.9 595.9,262.4 599.6,263.9 603.2,268.5 606.9,276.1 610.5,283.7 614.2,291.3 617.8,295.9 621.5,300.4 625.1,305.0 628.8,306.5 632.4,305.0 636.1,303.5 639.7,301.9 643.4,297.4 647.0,295.9 650.7,297.4 654.3,298.9 658.0,300.4 661.7,305.0 665.3,306.5 669.0,308.0 672.6,312.6 676.3,314.1 679.9,312.6 683.6,314.1 687.2,315.6 690.9,317.1 694.5,318.7 698.2,323.2 701.8,324.7 705.5,326.3 709.1,324.7 712.8,326.3 716.4,324.7 720.1,323.2 723.7,318.7 727.4,317.1 731.1,315.6 734.7,317.1 738.4,318.7 742.0,320.2 745.7,321.7 749.3,323.2 753.0,321.7 756.6,323.2 760.3,324.7 763.9,326.3 767.6,324.7 771.2,326.3 774.9,327.8 778.5,332.3 782.2,333.9 785.8,335.4 789.5,336.9 793.1,338.4 796.8,336.9 800.5,338.4 804.1,339.9 807.8,338.4 811.4,336.9 815.1,338.4 818.7,339.9 822.4,344.5 826.0,349.1 829.7,350.6 833.3,352.1 837.0,350.6 840.6,346.0 844.3,344.5 847.9,343.0 851.6,338.4 855.2,333.9 858.9,329.3 862.5,324.7 866.2,323.2 869.9,321.7 873.5,320.2 877.2,321.7 880.8,320.2 884.5,315.6 888.1,314.1 891.8,315.6 895.4,317.1 899.1,321.7 902.7,326.3 906.4,330.8 910.0,332.3 913.7,330.8 917.3,329.3 921.0,327.8 924.6,323.2 928.3,321.7 931.9,323.2 935.6,324.7 939.3,329.3 942.9,336.9 946.6,341.5 950.2,346.0 953.9,347.5 957.5,349.1 961.2,347.5 964.8,346.0 968.5,344.5 972.1,346.0 975.8,347.5 979.4,349.1 983.1,350.6 986.7,352.1 990.4,350.6 994.0,349.1 997.7,350.6 1001.3,355.1 1005.0,359.7" fill="none" stroke="#ffff50" stroke-width="0.9" stroke-linejoin="round"/>
<circle cx="172.5" cy="614.3" r="10.3" fill="#ff1010" stroke="#ff6090" stroke-width="0.8"/>
<circle cx="197.5" cy="673.5" r="10.3" fill="#5a3ee0" stroke="#c070e0" stroke-width="0.8"/>
<circle cx="222.5" cy="584.7" r="10.3" fill="#ff1010" stroke="#ff6090" stroke-width="0.8"/>
<circle cx="247.5" cy="643.9" r="10.3" fill="#0a7f0a" stroke="#50c0a0" stroke-width="0.8"/>
<circle cx="272.5" cy="643.9" r="10.3" fill="#0a7f0a" stroke="#50c0a0" stroke-width="0.8"/>
<circle cx="297.5" cy="643.9" r="10.3" fill="#0a7f0a" stroke="#50c0a0" stroke-width="0.8"/>
<circle cx="322.5" cy="673.5" r="10.3" fill="#5a3ee0" stroke="#c070e0" stroke-width="0.8"/>
<circle cx="347.5" cy="673.5" r="10.3" fill="#5a3ee0" stroke="#c070e0" stroke-width="0.8"/>
<circle cx="372.5" cy="584.7" r="10.3" fill="#ff1010" stroke="#ff6090" stroke-width="0.8"/>
<circle cx="397.5" cy="673.5" r="10.3" fill="#5a3ee0" stroke="#c070e0" stroke-width="0.8"/>
<circle cx="422.5" cy="614.3" r="10.3" fill="#ff1010" stroke="#ff6090" stroke-width="0.8"/>
<circle cx="447.5" cy="643.9" r="10.3" fill="#0a7f0a" stroke="#50c0a0" stroke-width="0.8"/>
<circle cx="472.5" cy="643.9" r="10.3" fill="#0a7f0a" stroke="#50c0a0" stroke-width="0.8"/>
<circle cx="497.5" cy="584.7" r="10.3" fill="#ff1010" stroke="#ff6090" stroke-width="0.8"/>
<circle cx="522.5" cy="673.5" r="10.3" fill="#5a3ee0" stroke="#c070e0" stroke-width="0.8"/>
<circle cx="547.5" cy="614.3" r="10.3" fill="#ff1010" stroke="#ff6090" stroke-width="0.8"/>
<circle cx="572.5" cy="643.9" r="10.3" fill="#0a7f0a" stroke="#50c0a0" stroke-width="0.8"/>
<circle cx="597.5" cy="673.5" r="10.3" fill="#5a3ee0" stroke="#c070e0" stroke-width="0.8"/>
<circle cx="622.5" cy="555.1" r="10.3" fill="#ff1010" stroke="#ff6090" stroke-width="0.8"/>
<circle cx="647.5" cy="673.5" r="10.3" fill="#5a3ee0" stroke="#c070e0" stroke-width="0.8"/>
<circle cx="672.5" cy="643.9" r="10.3" fill="#0a7f0a" stroke="#50c0a0" stroke-width="0.8"/>
<circle cx="697.5" cy="673.5" r="10.3" fill="#5a3ee0" stroke="#c070e0" stroke-width="0.8"/>
<circle cx="722.5" cy="643.9" r="10.3" fill="#ff20ff" stroke="#50c0a0" stroke-width="0.8"/>
<circle cx="747.5" cy="673.5" r="10.3" fill="#5a3ee0" stroke="#c070e0" stroke-width="0.8"/>
<circle cx="772.5" cy="673.5" r="10.3" fill="#5a3ee0" stroke="#c070e0" stroke-width="0.8"/>
<circle cx="797.5" cy="673.5" r="10.3" fill="#5a3ee0" stroke="#c070e0" stroke-width="0.8"/>
<circle cx="822.5" cy="614.3" r="10.3" fill="#ff1010" stroke="#ff6090" stroke-width="0.8"/>
<circle cx="847.5" cy="673.5" r="10.3" fill="#5a3ee0" stroke="#c070e0" stroke-width="0.8"/>
<circle cx="872.5" cy="643.9" r="10.3" fill="#0a7f0a" stroke="#50c0a0" stroke-width="0.8"/>
<circle cx="897.5" cy="673.5" r="10.3" fill="#5a3ee0" stroke="#c070e0" stroke-width="0.8"/>
<circle cx="922.5" cy="555.1" r="10.3" fill="#ff1010" stroke="#ff6090" stroke-width="0.8"/>
<circle cx="947.5" cy="643.9" r="10.3" fill="#0a7f0a" stroke="#50c0a0" stroke-width="0.8"/>
<circle cx="972.5" cy="673.5" r="10.3" fill="#20ff20" stroke="#c070e0" stroke-width="0.8"/>
<circle cx="997.5" cy="643.9" r="10.3" fill="#0a7f0a" stroke="#50c0a0" stroke-width="0.8"/>
<circle cx="1022.5" cy="673.5" r="10.3" fill="#5a3ee0" stroke="#c070e0" stroke-width="0.8"/>
<circle cx="1047.5" cy="525.5" r="10.3" fill="#ff1010" stroke="#ff6090" stroke-width="0.8"/>
<circle cx="1072.5" cy="643.9" r="10.3" fill="#0a7f0a" stroke="#50c0a0" stroke-width="0.8"/>
<circle cx="1097.5" cy="643.9" r="10.3" fill="#ffffff" stroke="#50c0a0" stroke-width="0.8"/>
<circle cx="1122.5" cy="673.5" r="10.3" fill="#5a3ee0" stroke="#c070e0" stroke-width="0.8"/>
<circle cx="1147.5" cy="584.7" r="10.3" fill="#ff1010" stroke="#ff6090" stroke-width="0.8"/>
<circle cx="1172.5" cy="673.5" r="10.3" fill="#5a3ee0" stroke="#c070e0" stroke-width="0.8"/>
<circle cx="1197.5" cy="643.9" r="10.3" fill="#0a7f0a" stroke="#50c0a0" stroke-width="0.8"/>
<circle cx="1222.5" cy="525.5" r="10.3" fill="#ff1010" stroke="#ff6090" stroke-width="0.8"/>
<line x1="172.5" y1="624.8" x2="197.5" y2="684.0" stroke="#d080d0" stroke-width="1"/>
<line x1="197.5" y1="684.0" x2="222.5" y2="595.2" stroke="#e070c0" stroke-width="1"/>
<line x1="222.5" y1="595.2" x2="247.5" y2="654.4" stroke="#e0a0d0" stroke-width="1"/>
<line x1="247.5" y1="654.4" x2="272.5" y2="654.4" stroke="#d040c0" stroke-width="1"/>
<line x1="272.5" y1="654.4" x2="297.5" y2="654.4" stroke="#d040c0" stroke-width="1"/>
<line x1="297.5" y1="654.4" x2="322.5" y2="684.0" stroke="#40a0e0" stroke-width="1"/>
<line x1="322.5" y1="684.0" x2="347.5" y2="684.0" stroke="#4060e0" stroke-width="1"/>
<line x1="347.5" y1="684.0" x2="372.5" y2="595.2" stroke="#4a6ae0" stroke-width="1"/>
<line x1="372.5" y1="595.2" x2="397.5" y2="684.0" stroke="#4a6ae0" stroke-width="1"/>
<line x1="397.5" y1="684.0" x2="422.5" y2="624.8" stroke="#9a90e0" stroke-width="1"/>
<line x1="422.5" y1="624.8" x2="447.5" y2="654.4" stroke="#e0c0e0" stroke-width="1"/>
<line x1="447.5" y1="654.4" x2="472.5" y2="654.4" stroke="#c040c0" stroke-width="1"/>
<line x1="472.5" y1="654.4" x2="497.5" y2="595.2" stroke="#8a90e0" stroke-width="1"/>
<line x1="497.5" y1="595.2" x2="522.5" y2="684.0" stroke="#e0a0d0" stroke-width="1"/>
<line x1="522.5" y1="684.0" x2="547.5" y2="624.8" stroke="#a0a0e0" stroke-width="1"/>
<line x1="547.5" y1="624.8" x2="572.5" y2="654.4" stroke="#40a0d8" stroke-width="1"/>
<line x1="572.5" y1="654.4" x2="597.5" y2="684.0" stroke="#40a0d8" stroke-width="1"/>
<line x1="597.5" y1="684.0" x2="622.5" y2="565.6" stroke="#60a8f0" stroke-width="1"/>
<line x1="622.5" y1="565.6" x2="647.5" y2="684.0" stroke="#4a4ae0" stroke-width="1"/>
<line x1="647.5" y1="684.0" x2="672.5" y2="654.4" stroke="#e080c0" stroke-width="1"/>
<line x1="672.5" y1="654.4" x2="697.5" y2="684.0" stroke="#d0c0e8" stroke-width="1"/>
<line x1="697.5" y1="684.0" x2="722.5" y2="654.4" stroke="#e080c0" stroke-width="1"/>
<line x1="722.5" y1="654.4" x2="747.5" y2="684.0" stroke="#e080c0" stroke-width="1"/>
<line x1="747.5" y1="684.0" x2="772.5" y2="684.0" stroke="#60a0e8" stroke-width="1"/>
<line x1="772.5" y1="684.0" x2="797.5" y2="684.0" stroke="#60a0e8" stroke-width="1"/>
<line x1="797.5" y1="684.0" x2="822.5" y2="624.8" stroke="#4a5ae0" stroke-width="1"/>
<line x1="822.5" y1="624.8" x2="847.5" y2="684.0" stroke="#4a6ae0" stroke-width="1"/>
<line x1="847.5" y1="684.0" x2="872.5" y2="654.4" stroke="#60a0e8" stroke-width="1"/>
<line x1="872.5" y1="654.4" x2="897.5" y2="684.0" stroke="#60a0e8" stroke-width="1"/>
<line x1="897.5" y1="684.0" x2="922.5" y2="565.6" stroke="#6080e0" stroke-width="1"/>
<line x1="922.5" y1="565.6" x2="947.5" y2="654.4" stroke="#90c0f0" stroke-width="1"/>
<line x1="947.5" y1="654.4" x2="972.5" y2="684.0" stroke="#c0a0e0" stroke-width="1"/>
<line x1="972.5" y1="684.0" x2="997.5" y2="654.4" stroke="#e060a0" stroke-width="1"/>
<line x1="997.5" y1="654.4" x2="1022.5" y2="684.0" stroke="#d0a0d8" stroke-width="1"/>
<line x1="1022.5" y1="684.0" x2="1047.5" y2="536.0" stroke="#c860e0" stroke-width="1"/>
<line x1="1047.5" y1="536.0" x2="1072.5" y2="654.4" stroke="#b060e0" stroke-width="1"/>
<line x1="1072.5" y1="654.4" x2="1097.5" y2="654.4" stroke="#b060e0" stroke-width="1"/>
<line x1="1097.5" y1="654.4" x2="1122.5" y2="684.0" stroke="#70b0f0" stroke-width="1"/>
<line x1="1122.5" y1="684.0" x2="1147.5" y2="595.2" stroke="#70b0f0" stroke-width="1"/>
<line x1="1147.5" y1="595.2" x2="1172.5" y2="684.0" stroke="#6070e0" stroke-width="1"/>
<line x1="1172.5" y1="684.0" x2="1197.5" y2="654.4" stroke="#5080e0" stroke-width="1"/>
<line x1="1197.5" y1="654.4" x2="1222.5" y2="536.0" stroke="#3050e0" stroke-width="1"/>
<line x1="165" y1="655" x2="1247" y2="655" stroke="#ff1010" stroke-width="2.4"/>
<text x="172.5" y="618.4" fill="#fff" font-size="11.5" text-anchor="middle">2</text>
<text x="197.5" y="677.6" fill="#fff" font-size="11.5" text-anchor="middle">0</text>
<text x="222.5" y="588.8" fill="#fff" font-size="11.5" text-anchor="middle">3</text>
<text x="247.5" y="648.0" fill="#fff" font-size="11.5" text-anchor="middle">1</text>
<text x="272.5" y="648.0" fill="#fff" font-size="11.5" text-anchor="middle">1</text>
<text x="297.5" y="648.0" fill="#fff" font-size="11.5" text-anchor="middle">1</text>
<text x="322.5" y="677.6" fill="#fff" font-size="11.5" text-anchor="middle">0</text>
<text x="347.5" y="677.6" fill="#fff" font-size="11.5" text-anchor="middle">0</text>
<text x="372.5" y="588.8" fill="#fff" font-size="11.5" text-anchor="middle">3</text>
<text x="397.5" y="677.6" fill="#fff" font-size="11.5" text-anchor="middle">0</text>
<text x="422.5" y="618.4" fill="#fff" font-size="11.5" text-anchor="middle">2</text>
<text x="447.5" y="648.0" fill="#fff" font-size="11.5" text-anchor="middle">1</text>
<text x="472.5" y="648.0" fill="#fff" font-size="11.5" text-anchor="middle">1</text>
<text x="497.5" y="588.8" fill="#fff" font-size="11.5" text-anchor="middle">3</text>
<text x="522.5" y="677.6" fill="#fff" font-size="11.5" text-anchor="middle">0</text>
<text x="547.5" y="618.4" fill="#fff" font-size="11.5" text-anchor="middle">2</text>
<text x="572.5" y="648.0" fill="#fff" font-size="11.5" text-anchor="middle">1</text>
<text x="597.5" y="677.6" fill="#fff" font-size="11.5" text-anchor="middle">0</text>
<text x="622.5" y="559.2" fill="#fff" font-size="11.5" text-anchor="middle">4</text>
<text x="647.5" y="677.6" fill="#fff" font-size="11.5" text-anchor="middle">0</text>
<text x="672.5" y="648.0" fill="#fff" font-size="11.5" text-anchor="middle">1</text>
<text x="697.5" y="677.6" fill="#fff" font-size="11.5" text-anchor="middle">0</text>
<text x="722.5" y="648.0" fill="#fff" font-size="11.5" text-anchor="middle">1</text>
<text x="747.5" y="677.6" fill="#fff" font-size="11.5" text-anchor="middle">0</text>
<text x="772.5" y="677.6" fill="#fff" font-size="11.5" text-anchor="middle">0</text>
<text x="797.5" y="677.6" fill="#fff" font-size="11.5" text-anchor="middle">0</text>
<text x="822.5" y="618.4" fill="#fff" font-size="11.5" text-anchor="middle">2</text>
<text x="847.5" y="677.6" fill="#fff" font-size="11.5" text-anchor="middle">0</text>
<text x="872.5" y="648.0" fill="#fff" font-size="11.5" text-anchor="middle">1</text>
<text x="897.5" y="677.6" fill="#fff" font-size="11.5" text-anchor="middle">0</text>
<text x="922.5" y="559.2" fill="#fff" font-size="11.5" text-anchor="middle">4</text>
<text x="947.5" y="648.0" fill="#fff" font-size="11.5" text-anchor="middle">1</text>
<text x="972.5" y="677.6" fill="#fff" font-size="11.5" text-anchor="middle">0</text>
<text x="997.5" y="648.0" fill="#fff" font-size="11.5" text-anchor="middle">1</text>
<text x="1022.5" y="677.6" fill="#fff" font-size="11.5" text-anchor="middle">0</text>
<text x="1047.5" y="529.6" fill="#fff" font-size="11.5" text-anchor="middle">5</text>
<text x="1072.5" y="648.0" fill="#fff" font-size="11.5" text-anchor="middle">1</text>
<text x="1097.5" y="648.0" fill="#000" font-size="11.5" text-anchor="middle">1</text>
<text x="1122.5" y="677.6" fill="#fff" font-size="11.5" text-anchor="middle">0</text>
<text x="1147.5" y="588.8" fill="#fff" font-size="11.5" text-anchor="middle">3</text>
<text x="1172.5" y="677.6" fill="#fff" font-size="11.5" text-anchor="middle">0</text>
<text x="1197.5" y="648.0" fill="#fff" font-size="11.5" text-anchor="middle">1</text>
<text x="1222.5" y="529.6" fill="#fff" font-size="11.5" text-anchor="middle">5</text>
<text x="1239.5" y="528.5" fill="#fff" font-size="12" text-anchor="middle">?</text>
</svg>
<div id="title" class="abs" style="left:0;top:75px;width:1280px;height:24px"><span style="left:294.6px">【个】单〖<i style="letter-spacing:-0.4px">5</i>〗注</span><span style="left:475.0px">理论周期<i>:2</i></span><span style="left:599.0px">最大遗漏<i>:9</i></span><span style="left:723.0px">上次遗漏<i>:1</i></span><span style="left:847.1px">当前遗漏<i>:5</i></span></div>

<!-- top toolbar -->
<div id="top">
  <div class="tab" style="left:0;width:53px;background:linear-gradient(90deg,#008c00,#00f000);color:#ff3c00">设置1</div>
  <div class="tab" style="left:54px;width:45px;height:19px;background:linear-gradient(90deg,#00e020,#008020);color:#fff">设置2</div>

  <div class="cb on" style="left:4px;top:25px"></div><div class="lbl mono" style="left:22px;top:25px">MA1</div>
  <div class="cb on" style="left:4px;top:42px"></div><div class="lbl mono" style="left:22px;top:42px">MA2</div>
  <div class="cb on" style="left:4px;top:59px"></div><div class="lbl mono" style="left:22px;top:59px">MA3</div>
  <div class="tb" style="left:62px;top:22px;width:24px;height:15px">5</div>
  <div class="tb" style="left:62px;top:39px;width:24px;height:15px">10</div>
  <div class="tb" style="left:62px;top:56px;width:24px;height:15px">30</div>
  <div class="spin" style="left:87px;top:22px"><i style="top:0"></i><i style="top:7px"></i></div>
  <div class="spin" style="left:87px;top:39px"><i style="top:0"></i><i style="top:7px"></i></div>
  <div class="spin" style="left:87px;top:56px"><i style="top:0"></i><i style="top:7px"></i></div>
  <div class="combo" style="left:106px;top:23px"><b style="background:#ffff00"></b><i></i></div>
  <div class="combo" style="left:106px;top:40px"><b style="background:#00ff00"></b><i></i></div>
  <div class="combo" style="left:106px;top:57px"><b style="background:#ff00ff"></b><i></i></div>

  <div class="cb on" style="left:149px;top:25px"></div><div class="lbl" style="left:167px;top:25px">布林通道</div>
  <div class="cb on" style="left:149px;top:42px"></div><div class="lbl" style="left:167px;top:42px">遗漏拐点</div>
  <div class="cb on" style="left:149px;top:59px"></div><div class="lbl" style="left:167px;top:59px"><span class="mono">K</span>值总均线</div>

  <div class="cb" style="left:250px;top:24px"></div><div class="lbl mono" style="left:267px;top:24px">MA1</div>
  <div class="cb" style="left:250px;top:41px"></div><div class="lbl mono" style="left:267px;top:41px">MA2</div>
  <div class="cb" style="left:250px;top:59px"></div><div class="lbl mono" style="left:267px;top:59px">MA3</div>
  <div class="tb" style="left:305px;top:20px;width:24px;height:16px">5</div>
  <div class="tb" style="left:305px;top:38px;width:24px;height:16px">10</div>
  <div class="tb" style="left:305px;top:56px;width:24px;height:16px">20</div>
  <div class="spin" style="left:330px;top:20px"><i style="top:0;height:8px"></i><i style="top:8px;height:8px"></i></div>
  <div class="spin" style="left:330px;top:38px"><i style="top:0;height:8px"></i><i style="top:8px;height:8px"></i></div>
  <div class="spin" style="left:330px;top:56px"><i style="top:0;height:8px"></i><i style="top:8px;height:8px"></i></div>
  <div class="combo" style="left:347px;top:20px;width:38px;height:16px"><b style="background:#fff;left:0;top:1px;width:17px;height:10px"></b><i style="height:12px"></i></div>
  <div class="combo" style="left:347px;top:38px;width:38px;height:16px"><b style="background:#00ff00;left:0;top:1px;width:17px;height:10px"></b><i style="height:12px"></i></div>
  <div class="combo" style="left:347px;top:56px;width:38px;height:16px"><b style="background:#ff00ff;left:0;top:1px;width:17px;height:10px"></b><i style="height:12px"></i></div>

  <!-- position checkboxes -->
  <div class="cb" style="left:617px;top:5px"></div><div class="lbl" style="left:636px;top:1px;font-size:16px;line-height:20px">万</div>
  <div class="cb" style="left:668px;top:5px"></div><div class="lbl" style="left:687px;top:1px;font-size:16px;line-height:20px">千</div>
  <div class="cb" style="left:719px;top:5px"></div><div class="lbl" style="left:739px;top:1px;font-size:16px;line-height:20px">百</div>
  <div class="cb" style="left:768px;top:5px"></div><div class="lbl" style="left:788px;top:1px;font-size:16px;line-height:20px">十</div>
  <div class="cb on" style="left:816px;top:5px"></div><div class="lbl" style="left:835px;top:1px;font-size:16px;line-height:20px">个</div>

  <div class="nb" style="left:575px;top:23px"><span>0</span></div>
  <div class="nb" style="left:606px;top:23px"><span>1</span></div>
  <div class="nb" style="left:637px;top:23px"><span>2</span></div>
  <div class="nb" style="left:668px;top:23px"><span>3</span></div>
  <div class="nb" style="left:699px;top:23px"><span class="f">4</span></div>
  <div class="nb" style="left:730px;top:23px"><span>5</span></div>
  <div class="nb" style="left:761px;top:23px"><span>6</span></div>
  <div class="nb" style="left:792px;top:23px"><span>7</span></div>
  <div class="nb" style="left:823px;top:23px"><span>8</span></div>
  <div class="nb" style="left:854px;top:23px"><span>9</span></div>
  <div class="nb" style="left:637px;top:48px"><span>0</span></div>
  <div class="nb" style="left:668px;top:48px"><span>1</span></div>
  <div class="nb" style="left:699px;top:48px"><span>2</span></div>
  <div class="nb" style="left:730px;top:48px"><span>3</span></div>
  <div class="nb" style="left:761px;top:48px"><span class="f">4</span></div>
  <div class="nb" style="left:792px;top:48px"><span>5</span></div>
  <div class="btn" style="left:554px;top:51px;width:75px;height:22px;font-size:15px;line-height:18px">大底搜索</div>
  <div class="cb" style="left:840px;top:55px"></div><div class="lbl" style="left:857px;top:54px">计重</div>

  <div class="btn" style="left:901px;top:5px;width:30px;height:28px;font-size:17px;line-height:25px">文</div>
  <div class="btn" style="left:901px;top:44px;width:30px;height:28px;font-size:19px;line-height:25px;font-weight:bold">清</div>
  <div class="rad" style="left:936px;top:16px"></div>
  <div class="rad" style="left:936px;top:36px"></div>
  <div class="rad on" style="left:936px;top:56px"></div>
  <div class="lbl" style="left:956px;top:13px;font-size:16px;line-height:20px;font-weight:bold">跨</div>
  <div class="lbl" style="left:956px;top:32px;font-size:16px;line-height:20px;font-weight:bold">合</div>
  <div class="lbl" style="left:956px;top:52px;font-size:16px;line-height:20px;font-weight:bold">胆</div>
  <div class="btn" style="left:983px;top:10px;width:54px;height:28px;font-size:15px;line-height:25px;word-spacing:2px">位 屏</div>
  <div class="btn" style="left:983px;top:45px;width:54px;height:28px;font-size:15px;line-height:25px;word-spacing:2px">同 屏</div>

  <div class="abs" style="left:1084px;top:3px;width:65px;height:70px;border:1px solid #000;font-size:12px;line-height:13px;padding:3px 0 0 1px;white-space:pre;font-family:'Liberation Mono',monospace;letter-spacing:-1.2px">1 3 5 7 9</div>
  <div class="btn" style="left:1152px;top:2px;width:74px;height:26px;font-size:15px;line-height:23px">粘贴查询</div>
  <div class="lbl" style="left:1174px;top:28px;font-size:15px;line-height:18px;color:#000830;word-spacing:3px">5 注</div>
  <div class="btn" style="left:1152px;top:47px;width:74px;height:26px;font-size:15px;line-height:23px">生成号码</div>
  <div class="tb" style="left:1241px;top:3px;width:20px;height:20px;background:#9dd7ff;text-align:left;padding-left:2px;line-height:15px">2</div>
  <div class="tb" style="left:1233px;top:25px;width:28px;height:21px;background:#9dd7ff;text-align:left;padding-left:2px;font-size:17px;line-height:17px;color:#000830">38</div>
  <div class="btn" style="left:1232px;top:47px;width:30px;height:26px;font-size:15px;line-height:23px;text-align:left;padding-left:6px">随</div>
</div>

<!-- right column -->
<div id="rightcol"></div>
<div class="vt" style="top:2px;height:120px"><span style="top:20px">走</span><span style="top:52px">势</span><span style="top:84px">图</span></div>
<div class="vt" style="top:125px;height:118px"><span style="top:19px">扫</span><span style="top:51px">描</span><span style="top:83px">图</span></div>
<div class="vt" style="top:245px;height:127px;left:1256px;width:23px;border-radius:0 0 3px 3px;background:linear-gradient(90deg,#80d400,#0a8a0a);color:#1414e6"><span style="top:20px;font-family:'Liberation Serif',serif;font-size:15px">K</span><span style="top:51px">线</span><span style="top:83px">图</span></div>
<div class="abs" style="left:1257px;top:395px;width:23px;height:23px;background:#f01010"><svg width="23" height="23"><path d="M6 5 L17 18 M17 5 L6 18" stroke="#fff" stroke-width="1.2" fill="none"/></svg></div>
<div class="abs" style="left:1257px;top:420px;width:23px;height:24px;background:#800090"><svg width="23" height="24"><path d="M5 12.5 H18" stroke="#fff" stroke-width="1.4"/></svg></div>
<div class="abs" style="left:1257px;top:474px;width:23px;height:71px;background:#f01010;color:#fff;font-size:19px;line-height:23px;text-align:center;font-weight:300"><div style="margin-top:1px;font-size:17px">※</div><div>漏</div><div>图</div></div>
<div class="abs" style="left:1257px;top:547px;width:23px;height:68px;background:#0c8020;color:#fff;font-size:19px;line-height:22px;text-align:center;font-weight:300"><div style="margin-top:0">遗</div><div>漏</div><div style="font-family:'Liberation Serif',serif;font-size:18px">K</div></div>
<div class="abs" style="left:1257px;top:617px;width:23px;height:68px;background:#0c8020;color:#fff;font-size:14px;line-height:15px;text-align:center;font-family:'Liberation Mono',monospace;letter-spacing:-1px;padding-top:20px">MA<br>CD</div>

<!-- left panel -->
<div id="lp"><div class="in"></div></div>
<div class="abs" style="left:106px;top:82px;width:28px;height:23px;background:#ff0a0a"><svg width="28" height="23"><path d="M7 5 L19 17 M19 5 L7 17" stroke="#fff" stroke-width="1.2" fill="none"/></svg></div>
<div class="abs" style="left:134px;top:82px;width:27px;height:23px;background:#00f000"><svg width="27" height="23"><path d="M8 11.5 H20" stroke="#fff" stroke-width="1.2"/></svg></div>
<div class="ltab" style="left:3px;top:107px;width:21px;height:52px;background:linear-gradient(90deg,#00a000,#00f800);color:#e03000;border-radius:2px;justify-content:flex-start;padding-top:3px"><span>一</span><span>星</span></div>
<div class="ltab" style="top:161px;height:44px"><span>二</span><span>星</span></div>
<div class="ltab" style="top:208px;height:47px"><span>三</span><span>星</span></div>
<div class="ltab" style="top:258px;height:46px"><span>四</span><span>星</span></div>
<div class="ltab" style="top:308px;height:46px"><span>五</span><span>星</span></div>
<div class="ltab" style="top:358px;height:54px"><span>其</span><span>它</span><span>1</span></div>
<div class="ltab" style="top:417px;height:55px"><span>其</span><span>它</span><span>2</span></div>
<div class="ltab" style="top:476px;height:55px"><span>其</span><span>它</span><span>3</span></div>
<div class="ltab" style="top:535px;height:55px"><span>其</span><span>它</span><span>4</span></div>
<div class="ltab" style="top:595px;height:55px"><span>其</span><span>它</span><span>5</span></div>
<div id="lb"><div style="background:#0a246a;color:#fff">单</div><div>双</div><div>合</div><div>大</div><div>小</div><div>质</div><div>阳</div><div>阴</div></div>
<div class="btn" style="left:114px;top:258px;width:46px;height:30px;font-size:17px;line-height:27px;letter-spacing:1px;box-shadow:inset 1px 1px 0 #fff,inset -1px -1px 0 #808080">出图</div>
<div class="cb" style="left:114px;top:317px"></div>
<div class="abs" style="left:133px;top:314px;width:28px;overflow:hidden;font-size:16px;line-height:20px;white-space:nowrap">多选</div>
<div class="btn" style="left:114px;top:358px;width:46px;height:30px;font-size:17px;line-height:27px;letter-spacing:1px;box-shadow:inset 1px 1px 0 #fff,inset -1px -1px 0 #808080">删除</div>
<div class="abs" style="left:164px;top:78px;width:1px;height:610px;background:#6a6a6a"></div>
</body>
</html>
